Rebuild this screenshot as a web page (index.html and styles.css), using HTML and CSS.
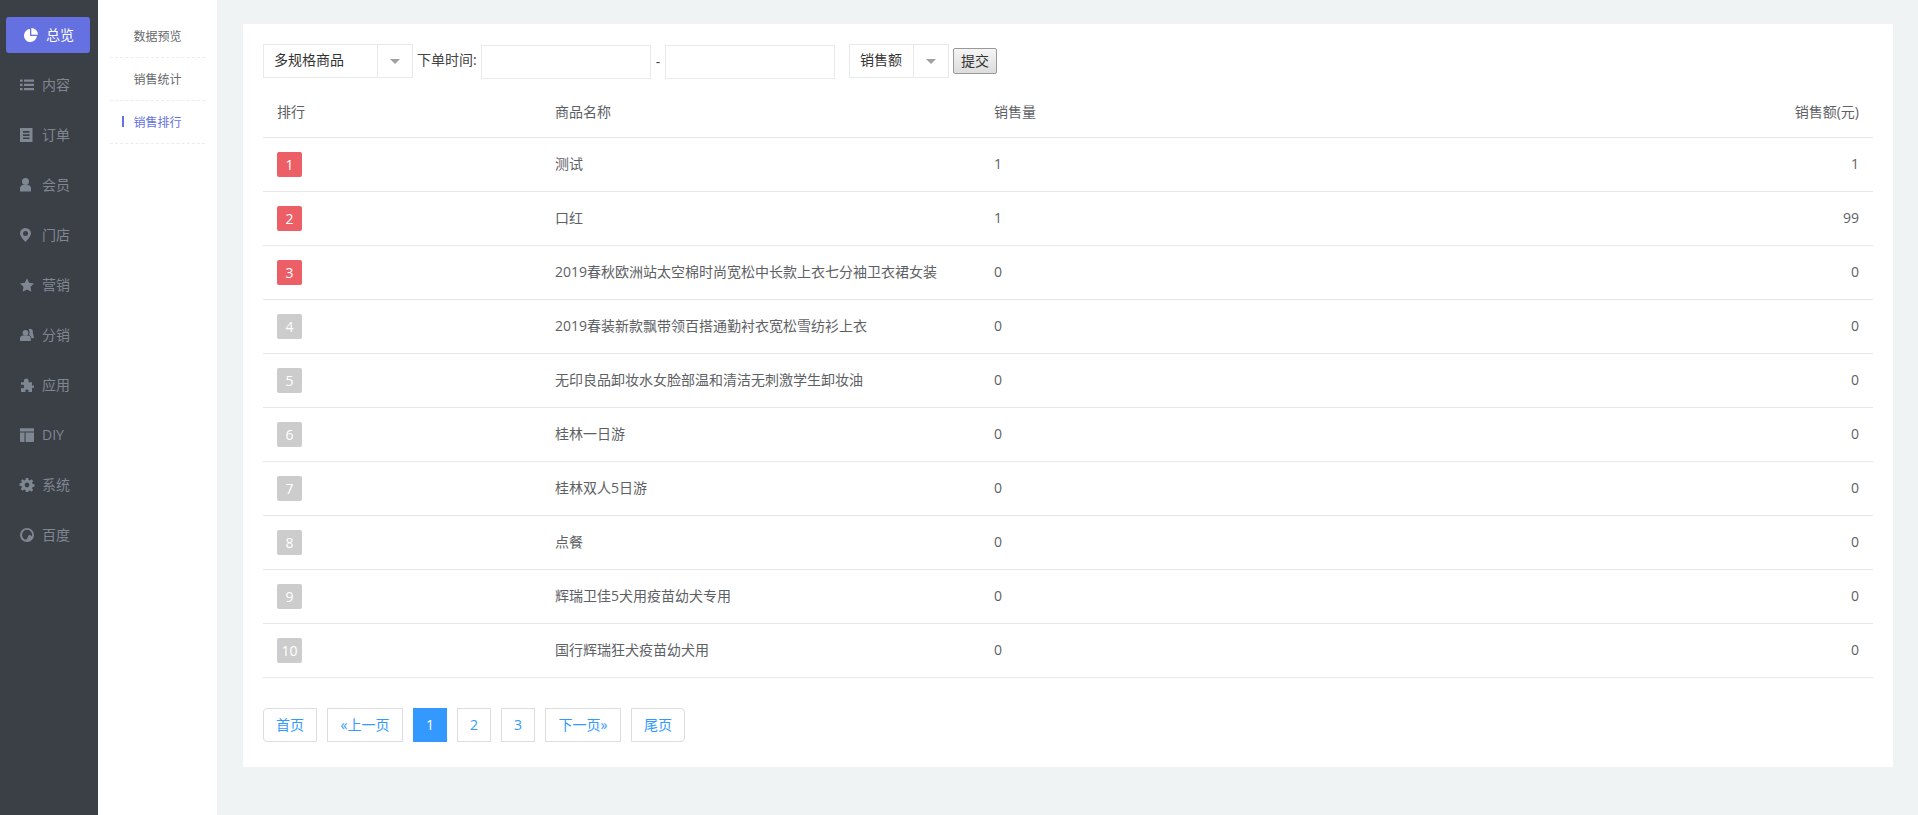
FILE: index.html
```html
<!DOCTYPE html>
<html lang="zh-CN">
<head>
<meta charset="utf-8">
<title>销售排行</title>
<link rel="stylesheet" href="styles.css">
</head>
<body>
<div class="app">
  <nav class="sidebar">
    <a class="nav-item active"><span class="nav-pill"><svg class="icon" viewBox="0 0 14 14"><path d="M6 1.100A6.500 6.500 0 1 0 12.900 8H6z"/><path d="M7.300 0v6.700H14A6.700 6.700 0 0 0 7.300 0z"/></svg>总览</span></a>
    <a class="nav-item"><span class="nav-pill"><svg class="icon" viewBox="0 0 14 14"><path d="M0 1.500h2.600v2.200H0zM4 1.500h10v2.200H4zM0 5.800h2.600V8H0zM4 5.800h10V8H4zM0 10.100h2.600v2.200H0zM4 10.100h10v2.200H4z"/></svg>内容</span></a>
    <a class="nav-item"><span class="nav-pill"><svg class="icon" viewBox="0 0 14 14"><path fill-rule="evenodd" d="M0 0h12.500v14H0zM3 3v1.700h6.500V3zM3 6.200v1.700h6.500V6.200zM3 9.400v1.700h6.500V9.400z"/></svg>订单</span></a>
    <a class="nav-item"><span class="nav-pill"><svg class="icon" viewBox="0 0 14 14"><circle cx="5.500" cy="3.600" r="3.500"/><path d="M0 13.500v-3C0 8.300 1.400 7 3.200 7h4.600C9.600 7 11 8.300 11 10.500v3z"/></svg>会员</span></a>
    <a class="nav-item"><span class="nav-pill"><svg class="icon" viewBox="0 0 14 14"><path fill-rule="evenodd" d="M5.500 0A5.500 5.500 0 0 0 0 5.500C0 8.500 5.500 14 5.500 14S11 8.500 11 5.500A5.500 5.500 0 0 0 5.500 0zm0 3a2.500 2.500 0 1 1 0 5 2.500 2.500 0 0 1 0-5z"/></svg>门店</span></a>
    <a class="nav-item"><span class="nav-pill"><svg class="icon" viewBox="0 0 14 14"><path d="M7 .3l2.100 4.400 4.900.7-3.500 3.400.8 4.900L7 11.400l-4.300 2.300.8-4.900L0 5.400l4.900-.7z"/></svg>营销</span></a>
    <a class="nav-item"><span class="nav-pill"><svg class="icon" viewBox="0 0 14 14"><circle cx="5.500" cy="4.800" r="2.900"/><path d="M0 13v-2.500C0 8.700 1.300 7.500 3 7.500h4.800c1.700 0 3 1.200 3 3V13z"/><path d="M8.500 1.500a2.800 2.800 0 0 1 3.400 0c1 .7 1.100 1.800.9 3L14 9.700l-1.300.6H11.600c-.3-1.500-1.200-2.800-2.700-3.500 1-1.500 1-3.800-.4-5.300z"/></svg>分销</span></a>
    <a class="nav-item"><span class="nav-pill"><svg class="icon" viewBox="0 0 14 14"><path d="M4 3.500C3.600 1.700 5 .5 6.300.5S9 1.700 8.600 3.500c-.1.500-.2.800.5.800H12v2.800c0 .6.400.7 1 .3.500-.3 1 0 1 1.200 0 1.300-.5 1.600-1 1.300-.6-.4-1-.3-1 .3V14H8.700c-.5 0-.5-.5-.2-1 .4-.7 0-1.600-1.500-1.600S5 12.300 5.400 13c.3.500.3 1-.2 1H1v-3.600c0-.6.500-.8 1-.4.800.6 2.200.3 2.200-1.300S2.800 6.100 2 6.700c-.5.400-1 .2-1-.4V4.300h2.500c.5 0 .6-.3.500-.8z"/></svg>应用</span></a>
    <a class="nav-item"><span class="nav-pill"><svg class="icon" viewBox="0 0 14 14"><path d="M0 .2h14v3.300H0zM0 4.600h4.500V14H1a1 1 0 0 1-1-1zM5.600 4.600H14V13a1 1 0 0 1-1 1H5.600z"/></svg>DIY</span></a>
    <a class="nav-item"><span class="nav-pill"><svg class="icon" viewBox="0 0 14 14"><path fill-rule="evenodd" d="M5.800 0h2.400l.4 1.900 1.300.5L11.500 1.300l1.700 1.700-1.100 1.600.5 1.300 1.900.4v2.400l-1.900.4-.5 1.300 1.100 1.600-1.700 1.700-1.600-1.100-1.300.5L8.200 14H5.800l-.4-1.900-1.300-.5-1.600 1.100L.8 11l1.100-1.600-.5-1.300L-.5 7.700V5.300l1.900-.4.5-1.300L.8 3 2.500 1.300l1.600 1.100 1.300-.5zM7 4.600a2.400 2.400 0 1 0 0 4.800 2.400 2.400 0 0 0 0-4.800z"/></svg>系统</span></a>
    <a class="nav-item"><span class="nav-pill"><svg class="icon" viewBox="0 0 14 14"><path fill-rule="evenodd" d="M7 0a7 7 0 1 0 0 14A7 7 0 0 0 7 0zm0 1.800a5.200 5.200 0 0 1 5 6.700c-1-1.500-2-2-3.100-1.200-.8.600-1.200 2.100-1.900 3.500-.5 1-1.700 1.200-2.600.5A5.200 5.200 0 0 1 7 1.800z"/></svg>百度</span></a>
  </nav>

  <aside class="subnav">
    <a class="subnav-item">数据预览</a>
    <a class="subnav-item">销售统计</a>
    <a class="subnav-item current">销售排行</a>
  </aside>

  <main class="main">
    <section class="card">
      <form class="filters">
        <div class="select select-goods"><span class="select-value">多规格商品</span><span class="select-arrow"></span></div>
        <label class="filter-label">下单时间:</label>
        <input class="date-input" type="text">
        <span class="dash">-</span>
        <input class="date-input" type="text">
        <div class="select select-sort"><span class="select-value">销售额</span><span class="select-arrow"></span></div>
        <button class="submit" type="button">提交</button>
      </form>

      <table class="rank-table">
        <colgroup><col class="col-rank"><col class="col-name"><col class="col-qty"><col class="col-amount"></colgroup>
        <thead>
          <tr><th>排行</th><th>商品名称</th><th>销售量</th><th class="num">销售额(元)</th></tr>
        </thead>
        <tbody>
          <tr><td><span class="badge top">1</span></td><td>测试</td><td>1</td><td class="num">1</td></tr>
          <tr><td><span class="badge top">2</span></td><td>口红</td><td>1</td><td class="num">99</td></tr>
          <tr><td><span class="badge top">3</span></td><td>2019春秋欧洲站太空棉时尚宽松中长款上衣七分袖卫衣裙女装</td><td>0</td><td class="num">0</td></tr>
          <tr><td><span class="badge">4</span></td><td>2019春装新款飘带领百搭通勤衬衣宽松雪纺衫上衣</td><td>0</td><td class="num">0</td></tr>
          <tr><td><span class="badge">5</span></td><td>无印良品卸妆水女脸部温和清洁无刺激学生卸妆油</td><td>0</td><td class="num">0</td></tr>
          <tr><td><span class="badge">6</span></td><td>桂林一日游</td><td>0</td><td class="num">0</td></tr>
          <tr><td><span class="badge">7</span></td><td>桂林双人5日游</td><td>0</td><td class="num">0</td></tr>
          <tr><td><span class="badge">8</span></td><td>点餐</td><td>0</td><td class="num">0</td></tr>
          <tr><td><span class="badge">9</span></td><td>辉瑞卫佳5犬用疫苗幼犬专用</td><td>0</td><td class="num">0</td></tr>
          <tr><td><span class="badge">10</span></td><td>国行辉瑞狂犬疫苗幼犬用</td><td>0</td><td class="num">0</td></tr>
        </tbody>
      </table>

      <div class="pagination">
        <a class="page short first">首页</a>
        <a class="page long">«上一页</a>
        <a class="page on">1</a>
        <a class="page">2</a>
        <a class="page">3</a>
        <a class="page long">下一页»</a>
        <a class="page short last">尾页</a>
      </div>
    </section>
  </main>
</div>
</body>
</html>
```

FILE: styles.css
```css
* { box-sizing: border-box; }
html, body { margin: 0; height: 100%; }
body {
  font-family: "Open Sans", "Noto Sans CJK SC", sans-serif;
  font-size: 14px;
  color: #5e6164;
  background: #f0f3f4;
  overflow: hidden;
}
.app { display: flex; min-height: 815px; }

/* primary nav */
.sidebar { width: 98px; flex: none; background: #3b3f46; padding-top: 10px; }
.nav-item { display: block; height: 50px; padding: 7px 8px 7px 6px; color: #7f8792; }
.nav-pill { display: flex; align-items: center; gap: 8px; height: 36px; padding: 0 0 1px 14px; border-radius: 3px; line-height: 35px; }
.icon { width: 14px; height: 14px; fill: currentColor; flex: none; overflow: visible; }
.nav-item.active { color: #fff; }
.nav-item.active .nav-pill { background: #6570e1; padding-left: 18px; }

/* secondary nav */
.subnav { width: 119px; flex: none; background: #fff; padding: 15px 12px 0; }
.subnav-item { display: block; height: 43px; line-height: 44px; text-align: center; font-size: 12px; color: #66696c; border-bottom: 1px dashed #eaeced; position: relative; }
.subnav-item.current { color: #6570e1; }
.subnav-item.current::before { content: ""; position: absolute; left: 12px; top: 15px; width: 2px; height: 11px; background: #6570e1; }

/* content */
.main { flex: 1; padding: 24px 25px 0 26px; }
.card { background: #fff; padding: 20px 20px 25px; }

.filters { display: flex; align-items: center; height: 35px; margin: 0; color: #444; }
.select { display: flex; height: 34px; margin-top: -1px; border: 1px solid #e9e9e9; background: #fff; color: #333; }
.select-value { flex: 1; line-height: 30px; padding-left: 10px; }
.select-arrow { width: 35px; flex: none; border-left: 1px solid #e9e9e9; position: relative; }
.select-arrow::after { content: ""; position: absolute; left: 12px; top: 14px; border: 5px solid transparent; border-top: 5px solid #a0a0a0; border-bottom: 0; }
.select-goods { width: 150px; }
.select-sort { width: 100px; margin-left: 14px; }
.filter-label { margin-left: 4px; width: 64px; line-height: 32px; align-self: flex-start; }
.date-input { width: 170px; height: 34px; align-self: flex-end; border: 1px solid #e9e9e9; background: #fff; padding: 0 8px; }
.dash { width: 14px; text-align: center; }
.submit {
  width: 44px; height: 26px; margin-left: 4px; margin-top: -1px; padding: 0 0 2px;
  border: 1px solid #999; border-radius: 2px;
  background: linear-gradient(#f5f5f5, #dcdcdc);
  color: #333; font: 14px "Open Sans", "Noto Sans CJK SC", sans-serif;
}

.rank-table { width: 100%; table-layout: fixed; border-collapse: collapse; margin-top: 10px; color: #5e6164; }
.col-rank { width: 278px; }
.col-name { width: 439px; }
.rank-table th { height: 48px; padding: 0 14px 3px; text-align: left; font-weight: 400; border-bottom: 1px solid #e7e7e7; }
.rank-table td { height: 54px; padding: 0 14px 2px; border-bottom: 1px solid #e7e7e7; }
.rank-table .num { text-align: right; }
.badge { display: block; width: 25px; height: 25px; margin-top: 2px; line-height: 25px; text-align: center; border-radius: 2px; background: #ccc; color: #fff; }
.badge.top { background: #ed5f66; }

.pagination { display: flex; gap: 10px; margin-top: 30px; }
.page { width: 34px; height: 34px; line-height: 31px; text-align: center; border: 1px solid #ddd; color: #3399ff; background: #fff; }
.page.short { width: 54px; }
.page.long { width: 76px; }
.page.first { border-radius: 4px 0 0 4px; }
.page.last { border-radius: 0 4px 4px 0; }
.page.on { background: #3399ff; border-color: #3399ff; color: #fff; }
```
